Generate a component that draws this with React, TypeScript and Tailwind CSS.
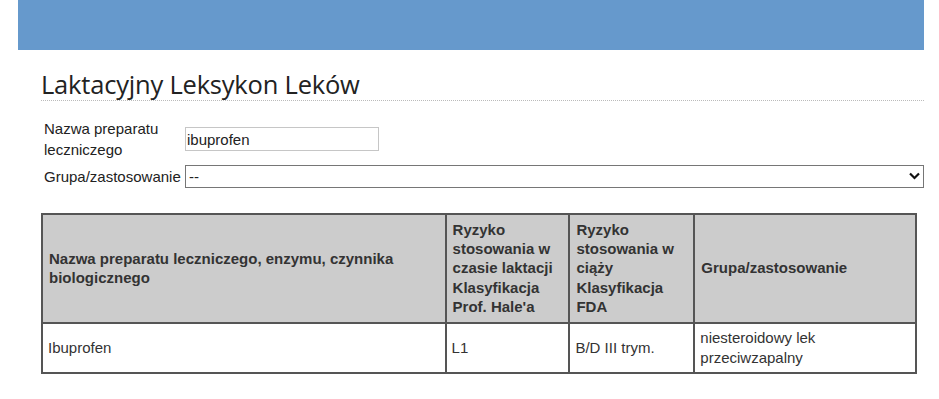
import React from "react";

const headers = [
  "Nazwa preparatu leczniczego, enzymu, czynnika biologicznego",
  "Ryzyko stosowania w czasie laktacji Klasyfikacja Prof. Hale'a",
  "Ryzyko stosowania w ciąży Klasyfikacja FDA",
  "Grupa/zastosowanie",
];

const rows = [["Ibuprofen", "L1", "B/D III trym.", "niesteroidowy lek przeciwzapalny"]];

const widths = ["w-[405px]", "w-[124px]", "w-[125px]", "w-[222px]"];

export default function App() {
  return (
    <div className="ml-[18px] w-[906px] bg-white font-['Liberation_Sans',Arial,sans-serif] text-[#222]">
      <div className="h-[50px] bg-[#6699cc]" />
      <div className="pl-[23px]">
        <h1 className="mt-[20px] border-b border-dotted border-[#bbb] pb-[1px] font-['Open_Sans',sans-serif] text-[25.5px] leading-[29px] tracking-[-0.2px] text-[#222]">
          Laktacyjny Leksykon Leków
        </h1>

        <form className="mt-[17px] grid grid-cols-[141px_1fr] items-center gap-y-[5px] pl-[3px] text-[15px]">
          <label htmlFor="name" className="leading-[21px]">
            Nazwa preparatu leczniczego
          </label>
          <div>
            <input
              id="name"
              type="text"
              defaultValue="ibuprofen"
              className="h-[24px] w-[194px] border border-[#c6c6c6] px-[1px] text-[15px] outline-none"
            />
          </div>
          <label htmlFor="group" className="leading-[21px]">
            Grupa/zastosowanie
          </label>
          <div className="relative">
            <select
              id="group"
              className="h-[23px] w-full appearance-none border border-[#767676] pl-[3px] text-[15px] leading-[21px] outline-none"
            >
              <option>--</option>
            </select>
            <svg
              className="pointer-events-none absolute right-[4px] top-[7px]"
              width="11"
              height="8"
              viewBox="0 0 11 8"
            >
              <path d="M1 1.5 L5.5 6 L10 1.5" fill="none" stroke="#111" strokeWidth="2.2" />
            </svg>
          </div>
        </form>

        <table className="mt-[24px] w-[876px] border-collapse border-2 border-[#555] text-[15px] text-[#333]">
          <thead>
            <tr className="bg-[#cccccc]">
              {headers.map((h, i) => (
                <th
                  key={h}
                  className={`${widths[i]} border-2 border-[#555] px-[6px] py-[5px] text-left align-middle text-[15px] font-bold leading-[19.4px]`}
                >
                  {h}
                </th>
              ))}
            </tr>
          </thead>
          <tbody>
            {rows.map((r) => (
              <tr key={r[0]}>
                {r.map((c) => (
                  <td key={c} className="border-2 border-[#555] px-[5px] py-[4px] align-middle leading-[20px]">
                    {c}
                  </td>
                ))}
              </tr>
            ))}
          </tbody>
        </table>
      </div>
    </div>
  );
}
